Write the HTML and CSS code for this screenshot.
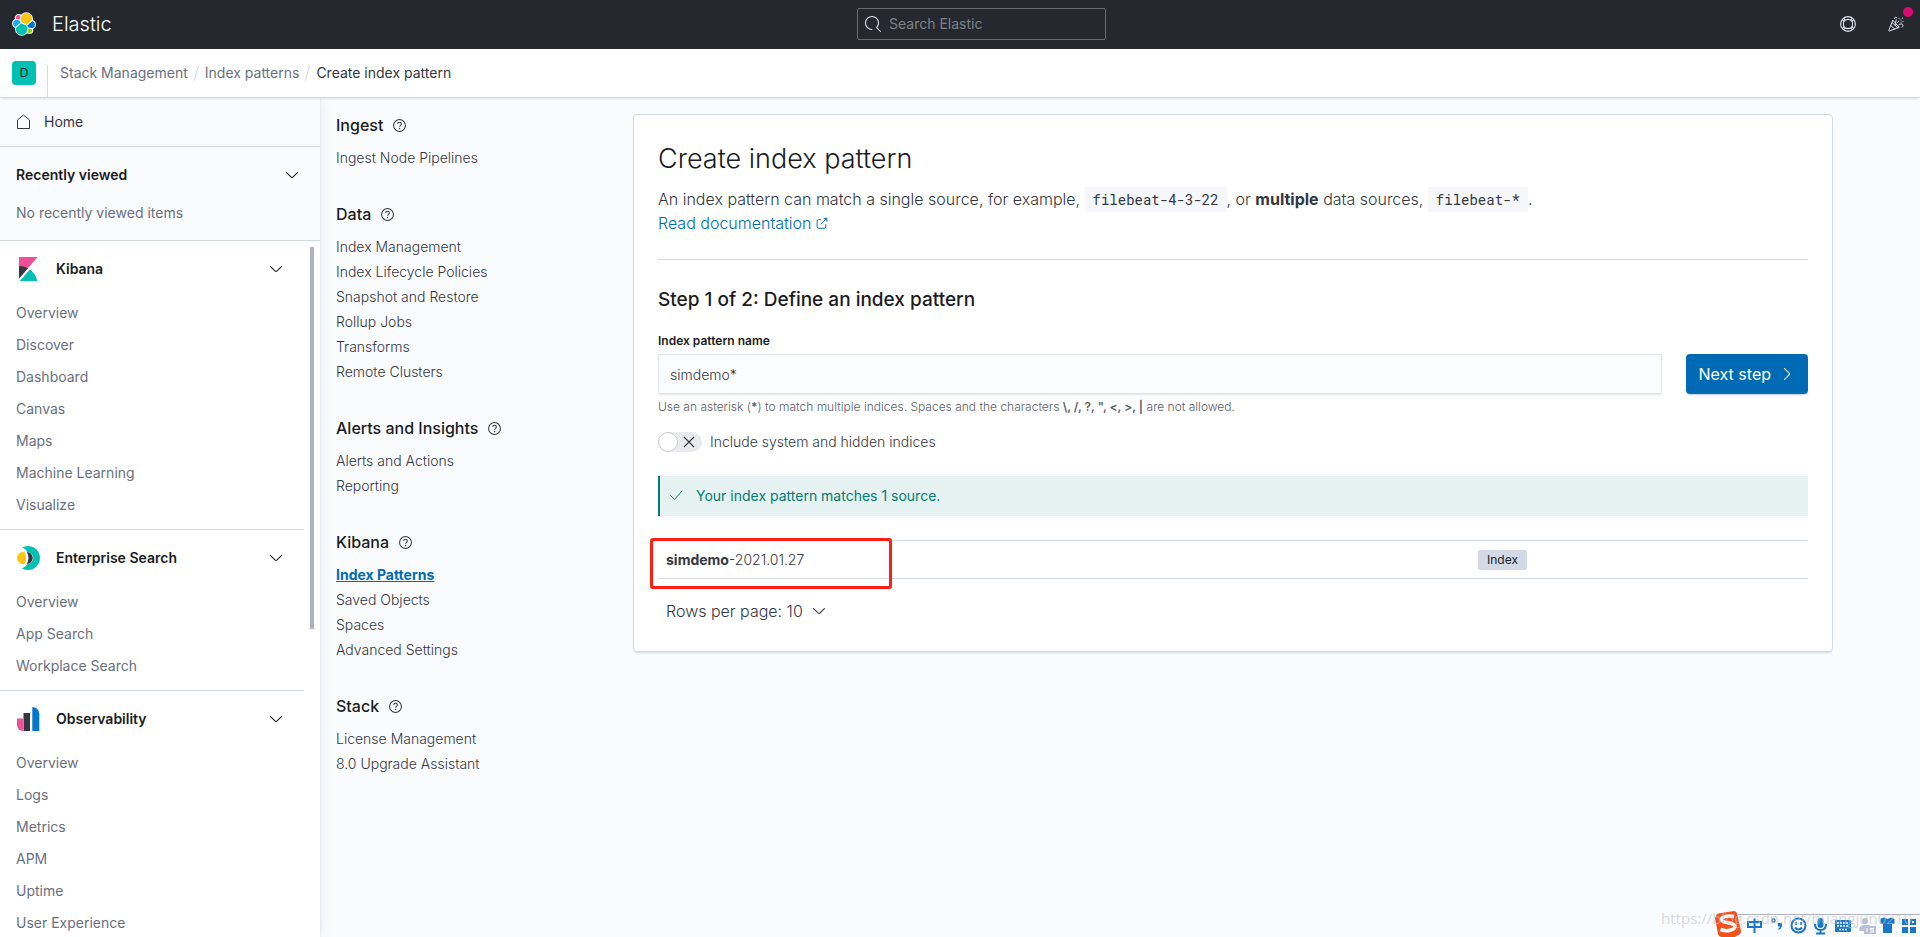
FILE: index.html
```html
<!DOCTYPE html>
<html lang="en">
<head>
<meta charset="utf-8">
<title>Create index pattern - Elastic</title>
<link rel="stylesheet" href="styles.css">
</head>
<body>
<svg class="sprite" aria-hidden="true">
  <symbol id="chevron" viewBox="0 0 16 16"><path d="M13.069 5.157L8.384 9.768a.546.546 0 01-.768 0L2.93 5.158a.552.552 0 00-.771 0 .53.53 0 000 .759l4.684 4.61c.641.631 1.672.63 2.312 0l4.684-4.61a.53.53 0 000-.76.552.552 0 00-.771 0z"/></symbol>
  <symbol id="help" viewBox="0 0 16 16"><circle cx="8" cy="8" r="7.3" fill="none" stroke="currentColor" stroke-width="1.3"/><path d="M5.8 6.3c0-1.4 1-2.2 2.3-2.2s2.2.8 2.2 2c0 1.700-2.200 1.700-2.200 3.500" fill="none" stroke="currentColor" stroke-width="1.3"/><circle cx="8.100" cy="11.600" r=".9"/></symbol>
</svg>

<header class="topbar">
  <a class="brand" href="#">
    <svg class="logo" viewBox="0 0 32 32" aria-hidden="true">
      <g stroke="#fff" stroke-width="2.600" stroke-linejoin="round" fill="#fff">
        <circle cx="19.100" cy="9.200" r="7.700"/><circle cx="13" cy="22.800" r="7.700"/><circle cx="8.800" cy="7.800" r="3.800"/><circle cx="6.700" cy="15.200" r="5.300"/><circle cx="23.200" cy="24.200" r="3.800"/><circle cx="25.300" cy="16.800" r="5.300"/>
      </g>
      <path fill="#FEC514" d="M12.580 13.787l7.002 3.211 7.066-6.213a7.849 7.849 0 00.152-1.557c0-4.287-3.470-7.770-7.742-7.770a7.716 7.716 0 00-6.400 3.405l-1.175 6.119 1.097 2.805z"/>
      <path fill="#00BFB3" d="M5.333 21.230a7.971 7.971 0 00-.15 1.580c0 4.301 3.483 7.800 7.773 7.800a7.763 7.763 0 006.437-3.429l1.164-6.090-1.554-2.985-7.024-3.212-6.646 6.336z"/>
      <path fill="#F04E98" d="M5.288 9.067l4.800 1.137 1.050-5.478a3.797 3.797 0 00-2.299-.772 3.810 3.810 0 00-3.551 5.113z"/>
      <path fill="#1BA9F5" d="M4.870 10.214a5.304 5.304 0 00-3.522 4.990 5.313 5.313 0 003.440 4.957l6.733-6.108-1.236-2.652-5.415-1.187z"/>
      <path fill="#93C90E" d="M20.873 27.180a3.770 3.770 0 002.286.781 3.810 3.810 0 003.800-3.814c0-.451-.08-.889-.235-1.299l-4.797-1.125-1.054 5.457z"/>
      <path fill="#07C" d="M21.848 20.563l5.280 1.238a5.304 5.304 0 003.523-4.990 5.310 5.310 0 00-3.432-4.955l-6.905 6.071 1.534 2.636z"/>
    </svg>
    <span>Elastic</span>
  </a>
  <label class="search">
    <svg viewBox="0 0 16 16" aria-hidden="true"><path d="M11.271 11.978l3.872 3.873a.502.502 0 00.708 0 .502.502 0 000-.708l-3.565-3.564c2.380-2.747 2.267-6.923-.342-9.532-2.730-2.730-7.170-2.730-9.898 0-2.728 2.729-2.728 7.170 0 9.900a6.955 6.955 0 004.949 2.050.5.5 0 000-1 5.960 5.960 0 01-4.242-1.757 6.010 6.010 0 010-8.486 6.004 6.004 0 018.484 0 6.010 6.010 0 010 8.486.5.5 0 00.034.738z"/></svg>
    <input type="search" placeholder="Search Elastic" aria-label="Search Elastic">
  </label>
  <div class="top-actions">
    <button type="button" aria-label="Help menu">
      <svg viewBox="0 0 16 16" fill="none" stroke="currentColor" stroke-width="1.100"><circle cx="8" cy="8" r="7.400"/><circle cx="8" cy="8" r="4.600"/><path d="M2.200 3.600l2 1.900M3.600 2.200l1.900 2M12.400 2.200l-1.900 2M13.800 3.600l-2 1.900M2.200 12.400l2-1.900M3.600 13.800l1.900-2M12.400 13.800l-1.900-2M13.800 12.400l-2-1.900"/></svg>
    </button>
    <button type="button" class="news" aria-label="News feed">
      <svg viewBox="0 0 16 16" fill="none" stroke="currentColor" stroke-linejoin="round"><path d="M4.800 4.200L.8 14.300c-.2.500.2.900.7.700l9.800-3.700zM4 6.500l6 5.500M2.800 9.500l4.300 4M7 9.500l1.300-6.200M8 8l1.500 1.500M6.300 3c-.2-1.500 1.600-2.400 2.600-1.300M10.500 9c1.200-1.400 4.400-1.600 4.500.5.100 1-.6 1.700-1.400 1.800M9 7l2.200-2.200"/><path d="M10.500 2.500h1M12.500 4h1M14 2.200h1M12.500 6.700h1M14.500 5.500h1"/></svg>
      <i class="dot"></i>
    </button>
  </div>
</header>

<div class="crumbbar">
  <button type="button" class="space" aria-label="Default space">D</button>
  <nav class="crumbs" aria-label="Breadcrumbs">
    <a href="#">Stack Management</a><i></i><a href="#">Index patterns</a><i></i><span>Create index pattern</span>
  </nav>
</div>

<div class="shell">
  <nav class="sidenav" aria-label="Primary">
    <a class="home" href="#">
      <svg class="i16" viewBox="0 0 16 16" fill="none" stroke="currentColor" stroke-linejoin="round"><path d="M1.500 6L7.500 1l6 5v8.500h-12z"/></svg>
      Home
    </a>
    <section class="recent">
      <button type="button" class="recent-head">Recently viewed<svg class="i16"><use href="#chevron"/></svg></button>
      <p>No recently viewed items</p>
    </section>
    <div class="scroll">
      <div class="thumb"></div>
      <section class="group">
        <button type="button" class="group-head">
          <svg class="logo" viewBox="0 0 32 32"><path fill="#F04E98" d="M4 0v28.789L28.935.017z"/><path fill="#343741" d="M4 12v16.789l11.906-13.738A24.721 24.721 0 004 12"/><path fill="#00BFB3" d="M18.479 16.664L6.268 30.754l-1.073 1.237h23.191c-1.252-6.292-4.883-11.719-9.908-15.327"/></svg>
          <span>Kibana</span><svg class="i16"><use href="#chevron"/></svg>
        </button>
        <a href="#">Overview</a><a href="#">Discover</a><a href="#">Dashboard</a><a href="#">Canvas</a><a href="#">Maps</a><a href="#">Machine Learning</a><a href="#">Visualize</a>
      </section>
      <section class="group">
        <button type="button" class="group-head">
          <svg class="logo" viewBox="0 0 24 24"><path fill="#00BFB3" d="M6 1.600A12 12 0 1 1 6 22.400C8.500 21.500 10.300 19.800 11.300 18A6 6 0 0 0 11.300 6C10.300 4.200 8.500 2.500 6 1.600z"/><path fill="#343741" d="M10.800 6A6 6 0 1 1 10.800 18C13 14 13 10 10.800 6z"/><path fill="#FEC514" d="M8.800 6.300C10.600 10 10.600 14 8.800 17.700A6 6 0 1 1 8.800 6.300z"/></svg>
          <span>Enterprise Search</span><svg class="i16"><use href="#chevron"/></svg>
        </button>
        <a href="#">Overview</a><a href="#">App Search</a><a href="#">Workplace Search</a>
      </section>
      <section class="group">
        <button type="button" class="group-head">
          <svg class="logo" viewBox="0 0 24 24"><path fill="#F04E98" d="M1 11.500h6V24a6 6 0 0 1-6-6z"/><path fill="#343741" d="M7.500 6h6.500v18H7.500z"/><path fill="#07C" d="M16.300 0a7 7 0 0 1 7 7v17h-7z"/></svg>
          <span>Observability</span><svg class="i16"><use href="#chevron"/></svg>
        </button>
        <a href="#">Overview</a><a href="#">Logs</a><a href="#">Metrics</a><a href="#">APM</a><a href="#">Uptime</a><a href="#">User Experience</a>
      </section>
    </div>
  </nav>

  <nav class="mgmt" aria-label="Stack Management">
    <section><h2>Ingest<svg><use href="#help"/></svg></h2><a href="#">Ingest Node Pipelines</a></section>
    <section><h2>Data<svg><use href="#help"/></svg></h2><a href="#">Index Management</a><a href="#">Index Lifecycle Policies</a><a href="#">Snapshot and Restore</a><a href="#">Rollup Jobs</a><a href="#">Transforms</a><a href="#">Remote Clusters</a></section>
    <section><h2>Alerts and Insights<svg><use href="#help"/></svg></h2><a href="#">Alerts and Actions</a><a href="#">Reporting</a></section>
    <section><h2>Kibana<svg><use href="#help"/></svg></h2><a href="#" class="current" aria-current="page">Index Patterns</a><a href="#">Saved Objects</a><a href="#">Spaces</a><a href="#">Advanced Settings</a></section>
    <section><h2>Stack<svg><use href="#help"/></svg></h2><a href="#">License Management</a><a href="#">8.0 Upgrade Assistant</a></section>
  </nav>

  <main class="content">
    <div class="panel">
      <h1>Create index pattern</h1>
      <p class="intro">An index pattern can match a single source, for example, <code>filebeat-4-3-22</code>, or <strong>multiple</strong> data sources, <code>filebeat-*</code>.<br>
        <a href="#">Read documentation <svg viewBox="0 0 16 16" fill="none" stroke="currentColor" stroke-width="1.300"><path d="M7 3.500H3.500a2 2 0 0 0-2 2v7.500a2 2 0 0 0 2 2h7.500a2 2 0 0 0 2-2V9.500M6.500 9.800L14.300 2M10 1.700h4.500v4.500"/></svg></a></p>
      <hr>
      <h2 class="step">Step 1 of 2: Define an index pattern</h2>
      <form class="form">
        <div class="fields">
          <label class="name" for="pattern">Index pattern name</label>
          <input class="text" id="pattern" type="text" value="simdemo*">
          <p class="hint">Use an asterisk (<b>*</b>) to match multiple indices. Spaces and the characters <b>\, /, ?, ", &lt;, &gt;, |</b> are not allowed.</p>
          <label class="toggle">
            <span class="track"><input type="checkbox" role="switch"><svg viewBox="0 0 16 16" fill="none" stroke="currentColor" stroke-width="1.100"><path d="M3 3l10 10M13 3L3 13"/></svg></span>
            Include system and hidden indices
          </label>
        </div>
        <button type="button" class="next">Next step<svg class="i16 right"><use href="#chevron"/></svg></button>
      </form>
      <div class="callout" role="status">
        <svg class="i16" viewBox="0 0 16 16" fill="none" stroke="currentColor" stroke-linecap="round" stroke-linejoin="round"><path d="M2.500 7.500l4 4 7.500-8.500"/></svg>
        Your index pattern matches 1 source.
      </div>
      <div class="matches">
        <table>
          <tbody><tr><td><b>simdemo</b>-2021.01.27</td><td><span class="badge">Index</span></td></tr></tbody>
        </table>
        <div class="highlight"></div>
      </div>
      <button type="button" class="rows">Rows per page: 10<svg class="i16"><use href="#chevron"/></svg></button>
    </div>
  </main>
</div>

<div class="ime">
  <svg viewBox="0 0 206 26" aria-hidden="true">
    <path d="M24 3.500H206" stroke="#aeb2c4"/>
    <path fill="#f4511e" d="M2 5Q2 3 4 2.500L20 0q2.500 0 3 2.500L27 20q0 3-3 4l-3 2H8q-3 0-4-3L1 7z"/>
    <path d="M20 5.500C12 4 7 6 7.500 9c.5 3.500 13 2 13.500 6 .4 4-8 6-14.500 3.500" fill="none" stroke="#fff" stroke-width="3.500"/>
    <g fill="none" stroke="#1976c9" stroke-width="2">
      <path d="M34 11h13v5H34zM40.500 7.500V22"/><circle cx="59.500" cy="9.500" r="1.600" stroke-width="1.300"/>
      <circle cx="84.500" cy="14.500" r="7"/><path d="M81 16.500q3.500 4 7 0"/><path d="M82 11v3M87 11v3" stroke-width="1.500"/>
      <path d="M101 13q0 6 5.500 6t5.500-6M106.500 19v4M102 22.500h9"/>
    </g>
    <g fill="#1976c9"><path d="M64 12h4v3q-.5 3-3.500 4v-1.500q1.500-.5 1.500-2H64z"/><rect x="103.500" y="7" width="6" height="10" rx="3"/>
      <rect x="121" y="9" width="16" height="12" rx="1"/>
      <path d="M168 7l2.500-.5q3 2.500 6 0l4 1.500v5h-2.500v9h-9v-9h-2.500V8z"/>
      <path d="M188 8h6v6h-6zM188 16h6v6h-6zM196 16h6v6h-6z"/></g>
    <path d="M197 9h4v4h-4z" fill="none" stroke="#1976c9" stroke-width="2"/>
    <path d="M123 12h12M123 15h12M125 18.500h8" stroke="#fff" stroke-width="1.500" stroke-dasharray="2 1"/>
    <g fill="#b8c0d2"><circle cx="151" cy="10" r="3"/><path d="M145 20q0-6 5-6h6v6zM150 15h12v8h-12z"/></g>
    <path d="M153 17v4M160 17.500h-3.500v1.500h3v2h-3.500" stroke="#fff" fill="none"/>
  </svg>
</div>
<div class="watermark">https://blog.csdn.net/huangjun0210</div>
</body>
</html>
```
FILE: styles.css
```css
* { box-sizing: border-box; }
html, body { height: 100%; }
body {
  margin: 0;
  display: flex;
  flex-direction: column;
  overflow: hidden;
  position: relative;
  background: #fafbfd;
  color: #343741;
  font: 400 14px/24px Inter, "Liberation Sans", sans-serif;
}
h1, h2, p { margin: 0; }
a { color: inherit; text-decoration: none; }
button, input { font: inherit; color: inherit; }
button { border: 0; background: none; padding: 0; }
svg { fill: currentColor; flex: none; }
svg[fill="none"] { fill: none; }
.sprite { position: absolute; width: 0; height: 0; }
.i16 { width: 16px; height: 16px; }
.logo { width: 24px; height: 24px; }

.topbar {
  display: grid;
  grid-template-columns: calc(50% - 103px) 249px 1fr;
  align-items: center;
  flex: none;
  height: 49px;
  padding: 0 12px 1px;
  background: #25282f;
  color: #dfe5ef;
}
.brand { display: flex; align-items: center; gap: 16px; font-size: 20px; font-weight: 300; color: #fff; }
.search {
  display: flex;
  align-items: center;
  gap: 8px;
  height: 32px;
  padding: 0 7px;
  border: 1px solid #696b70;
  border-radius: 2px;
}
.search svg { width: 16px; height: 16px; }
.search input { width: 100%; border: 0; outline: 0; padding: 0; background: none; }
.search input::placeholder { color: #7f8287; opacity: 1; }
.top-actions { display: flex; justify-content: flex-end; gap: 32px; padding-right: 4px; }
.top-actions svg { display: block; width: 16px; height: 16px; }
.news { position: relative; }
.dot { position: absolute; top: -9px; right: -9px; width: 10px; height: 10px; border-radius: 50%; background: #dd0a73; }

.crumbbar {
  display: flex;
  flex: none;
  height: 49px;
  padding-left: 12px;
  background: #fff;
  border-bottom: 1px solid #d3dae6;
  box-shadow: 0 2px 2px -1px rgba(152, 162, 179, .3);
  position: relative;
}
.space { width: 24px; height: 24px; margin: 12px 11px 0 0; border-radius: 4px; background: #00bfb3; color: #1a1c21; font-size: 12px; }
.crumbs { display: flex; align-items: center; gap: 8px; align-self: flex-end; height: 32px; padding: 0 0 16px 12px; border-left: 1px solid #d3dae6; color: #69707d; }
.crumbs i { width: 1px; height: 16px; background: #d3dae6; transform: rotate(15deg); }
.crumbs span { color: #343741; }

.shell { display: flex; flex: 1; min-height: 0; }
.sidenav {
  display: flex;
  flex-direction: column;
  flex: none;
  width: 320px;
  box-shadow: 0 0 12px rgba(65, 78, 101, .1), 0 0 2px rgba(65, 78, 101, .12);
}
.home { display: flex; align-items: center; gap: 12px; height: 49px; padding-left: 16px; border-bottom: 1px solid #d3dae6; }
.recent { padding: 16px; height: 94px; border-bottom: 1px solid #d3dae6; color: #69707d; }
.recent-head { display: flex; justify-content: space-between; width: 100%; padding-right: 4px; align-items: center; color: #1a1c21; font-weight: 600; margin-bottom: 14px; }
.scroll { flex: 1; min-height: 0; overflow: hidden; position: relative; background: #fff; }
.thumb { position: absolute; top: 6px; right: 6px; width: 4px; height: 382px; background: #b2b4bd; }
.group { display: flex; flex-direction: column; width: 304px; padding-bottom: 8px; border-bottom: 1px solid #d3dae6; }
.group a { padding: 4px 16px; color: #69707d; }
.group-head { display: flex; align-items: center; gap: 16px; height: 56px; padding: 0 20px 0 16px; text-align: left; color: #1a1c21; font-weight: 600; }
.group-head span { flex: 1; }

.mgmt { display: flex; flex-direction: column; gap: 32px; flex: none; width: 313px; padding: 15px 16px; font-weight: 300; }
.mgmt section { display: flex; flex-direction: column; align-items: flex-start; }
.mgmt h2 { display: flex; align-items: center; gap: 10px; margin-bottom: 8px; font-size: 16px; line-height: 24px; font-weight: 500; color: #1a1c21; }
.mgmt svg { width: 13px; height: 13px; color: #343741; }
.mgmt a { line-height: 25px; }
.mgmt .current { color: #006bb4; font-weight: 700; text-decoration: underline; }

.content { flex: 1; min-width: 0; padding: 16px 16px 16px 0; font-weight: 300; }
.panel {
  width: 100%;
  max-width: 1200px;
  padding: 24px;
  background: #fff;
  border: 1px solid #d3dae6;
  border-radius: 4px;
  box-shadow: 0 2px 2px -1px rgba(152, 162, 179, .4);
}
.panel h1 { font-size: 27px; line-height: 40px; font-weight: 300; color: #1a1c21; margin-bottom: 8px; }
.intro { font-size: 16px; }
.intro a { color: #006bb4; }
.intro svg { width: 12px; height: 12px; }
.intro code { padding: 3px 8px; background: #f5f7fa; font: 14px/1 "Roboto Mono", "Liberation Mono", monospace; }
.intro strong { font-weight: 700; }
hr { height: 1px; border: 0; margin: 24px 0; background: #d3dae6; }
.step { font-size: 19px; line-height: 32px; font-weight: 500; color: #1a1c21; margin-bottom: 16px; }
.form { display: grid; grid-template-columns: 1fr auto; gap: 24px; align-items: start; }
.fields { display: flex; flex-direction: column; }
.name { margin-bottom: 4px; font-size: 12px; line-height: 18px; font-weight: 600; color: #1a1c21; align-self: flex-start; }
.text { width: 100%; height: 40px; padding: 0 11px; border: 1px solid #e0e4ee; background: #fbfcfd; outline: 0; box-shadow: 0 2px 2px -1px rgba(152, 162, 179, .3); }
.hint { margin: 4px 0 16px; font-size: 12px; line-height: 18px; color: #5a606b; }
.hint b { font-weight: 600; }
.toggle { display: flex; align-items: center; gap: 8px; line-height: 20px; align-self: flex-start; }
.track { display: flex; align-items: center; gap: 3px; width: 44px; height: 20px; border-radius: 10px; background: #eaebee; }
.track input { appearance: none; width: 20px; height: 20px; margin: 0; border: 1px solid #c9cbcd; border-radius: 50%; background: #fff; }
.track svg { width: 16px; height: 16px; }
.next { display: flex; align-items: center; gap: 8px; height: 40px; margin-top: 22px; padding: 0 13px; border-radius: 4px; background: #006bb4; color: #fff; font-size: 16px; font-weight: 400; box-shadow: 0 2px 2px -1px rgba(54, 97, 126, .3); }
.right { transform: rotate(-90deg); }
.callout { display: flex; align-items: center; gap: 12px; height: 40px; margin: 24px 0; padding-left: 8px; border-left: 2px solid #017d73; background: #e6f2f1; color: #017d73; font-weight: 400; }
.matches { position: relative; }
table { width: 100%; border-collapse: collapse; table-layout: fixed; }
td { height: 38px; padding: 0 8px; border: solid #d3dae6; border-width: 1px 0; }
td:first-child { width: 812px; }
td b { font-weight: 700; }
.badge { display: block; width: max-content; padding: 0 9px; border-radius: 2px; background: #d3dae6; color: #1a1c21; font-size: 12px; line-height: 20px; font-weight: 400; }
.highlight { position: absolute; top: -2px; left: -8px; width: 242px; height: 51px; border: 3px solid #ff1e12; border-radius: 3px; }
.rows { display: flex; align-items: center; gap: 8px; height: 32px; margin-top: 16px; padding: 0 8px; font-size: 16px; }

.ime { position: absolute; right: 0; bottom: 0; width: 206px; height: 26px; }
.ime svg { display: block; width: 206px; height: 26px; }
.watermark { position: absolute; right: 8px; bottom: 7px; font: 15px/24px "Open Sans", sans-serif; color: rgba(190, 192, 198, .6); }
```
